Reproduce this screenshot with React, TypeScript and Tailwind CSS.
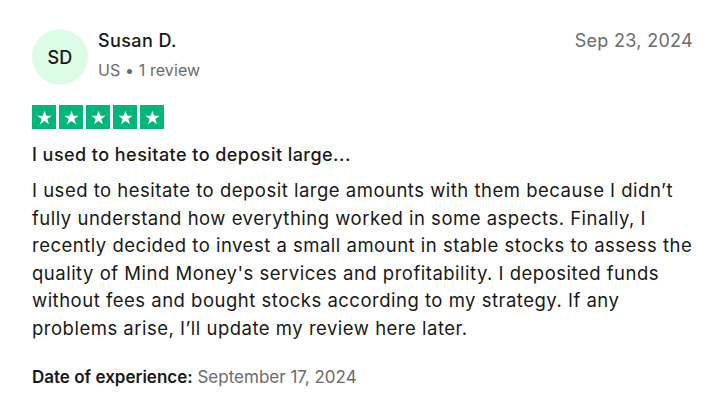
export default function App() {
  return (
    <div className="min-h-screen w-full bg-white pl-8 pr-3 pt-[29px] text-[#191919]" style={{ fontFamily: 'Inter, "Noto Sans", sans-serif' }}>
      <div className="flex items-start justify-between">
        <div className="flex items-start gap-[10px]">
          <div className="flex h-14 w-14 shrink-0 items-center justify-center rounded-full bg-[#dcfce5] text-[18px] font-medium tracking-[0.3px] text-[#191919]">
            SD
          </div>
          <div>
            <div className="text-[18px] font-medium leading-6 tracking-[0.4px]">Susan D.</div>
            <div className="mt-[5px] text-[16px] leading-6 tracking-[0.1px] text-[#6b6b6b]">US • 1 review</div>
          </div>
        </div>
        <div className="mr-2 text-[18px] leading-6 tracking-[0.3px] text-[#6b6b6b]">Sep 23, 2024</div>
      </div>

      <div className="mt-[20px] flex gap-[3px]">
        {[0, 1, 2, 3, 4].map((i) => (
          <div key={i} className="flex h-6 w-6 items-center justify-center bg-[#00b67a]">
            <svg viewBox="0 0 24 24" className="h-[17px] w-[17px]" fill="white">
              <path d="M12 2.5l2.6 7.1h7.5l-6.1 4.5 2.3 7.3L12 17l-6.3 4.4L8 14.1 1.9 9.6h7.5z" />
            </svg>
          </div>
        ))}
      </div>

      <h2 className="mt-[14px] text-[18px] font-medium leading-6 tracking-[0.45px]">I used to hesitate to deposit large...</h2>

      <p className="mt-[10px] text-[18.5px] leading-[27.6px] tracking-[0.5px]">
        I used to hesitate to deposit large amounts with them because I didn’t fully understand how everything worked in some aspects. Finally, I recently decided to invest a small amount in stable stocks to assess the quality of Mind Money's services and profitability. I deposited funds without fees and bought stocks according to my strategy. If any problems arise, I’ll update my review here later.
      </p>

      <div className="mt-[22px] text-[17px] leading-6">
        <span className="font-semibold">Date of experience:</span>{' '}
        <span className="text-[#6b6b6b]">September 17, 2024</span>
      </div>
    </div>
  );
}
